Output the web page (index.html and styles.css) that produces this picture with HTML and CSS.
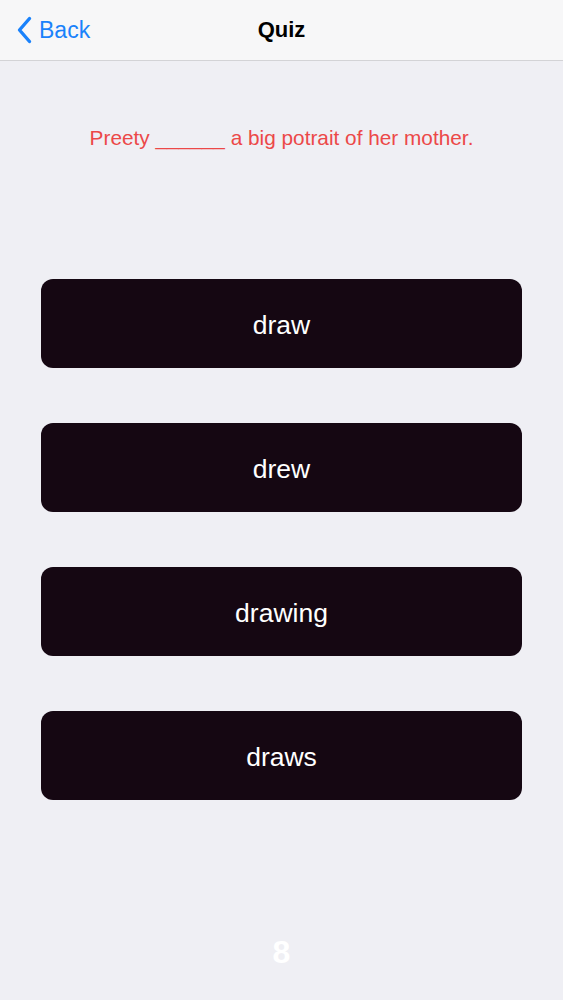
FILE: index.html
```html
<!DOCTYPE html>
<html>
<head>
<meta charset="utf-8">
<link rel="stylesheet" href="styles.css">
</head>
<body>
<div class="screen">
  <header class="nav">
    <div class="back">
      <svg class="chev" width="15" height="28" viewBox="0 0 15 28"><path d="M12.5 2.5 L2.5 14 L12.5 25.5" fill="none" stroke="#1a82fb" stroke-width="3.4" stroke-linecap="round" stroke-linejoin="round"/></svg>
      <span>Back</span>
    </div>
    <div class="title">Quiz</div>
  </header>
  <p class="question">Preety ______ a big potrait of her mother.</p>
  <div class="answers">
    <button class="ans">draw</button>
    <button class="ans">drew</button>
    <button class="ans">drawing</button>
    <button class="ans">draws</button>
  </div>
  <div class="count">8</div>
</div>
</body>
</html>
```

FILE: styles.css
```css
* { box-sizing: border-box; }
html, body { margin: 0; padding: 0; }
body {
  background: #efeff4;
  font-family: "Liberation Sans", Arial, sans-serif;
  width: 563px;
  height: 1000px;
  overflow: hidden;
}
.screen { display: flex; flex-direction: column; height: 1000px; }
.nav {
  height: 61px;
  background: #f7f7f8;
  border-bottom: 1px solid #d3d3d6;
  position: relative;
  display: flex;
  align-items: center;
  justify-content: center;
  flex-shrink: 0;
}
.back {
  position: absolute;
  left: 17px;
  top: 16px;
  display: flex;
  align-items: center;
  gap: 7px;
  color: #1a82fb;
  font-size: 23px;
}
.title { font-size: 22px; font-weight: bold; color: #000; padding-bottom: 1px; }
.question {
  margin: 63px 0 0;
  text-align: center;
  color: #ec4848;
  font-size: 20.8px;
  line-height: 28px;
}
.answers {
  margin: 127px 41px 0;
  display: flex;
  flex-direction: column;
  gap: 55px;
}
.ans {
  height: 89px;
  border: none;
  border-radius: 12px;
  background: #150712;
  color: #fff;
  font-family: "Liberation Sans", Arial, sans-serif;
  font-size: 26.5px;
  padding: 3px 0 0 0;
  line-height: 1;
}
.count {
  margin-top: 134px;
  text-align: center;
  color: #fff;
  font-size: 32px;
  font-weight: bold;
}
```
